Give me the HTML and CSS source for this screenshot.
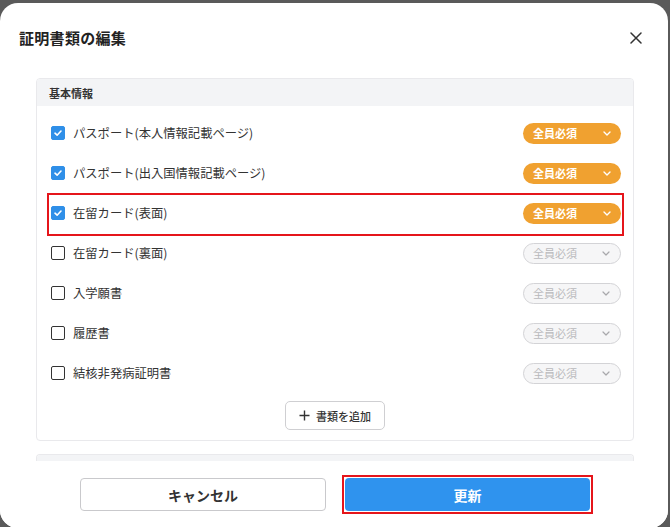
FILE: index.html
```html
<!DOCTYPE html>
<html lang="ja">
<head>
<meta charset="utf-8">
<link rel="stylesheet" href="styles.css">
</head>
<body>
<div class="modal">
  <div class="modal-header">
    <h1 class="title">証明書類の編集</h1>
    <button class="close" aria-label="close">
      <svg width="12" height="12" viewBox="0 0 12 12"><path d="M1 1L11 11M11 1L1 11" stroke="#333" stroke-width="1.5" stroke-linecap="round"/></svg>
    </button>
  </div>
  <div class="modal-body">
    <div class="card">
      <div class="card-header">基本情報</div>
      <ul class="list">
        <li class="row">
          <span class="cb checked"><svg width="10" height="10" viewBox="0 0 10 10"><path d="M2 5.2L4.1 7.2L8 3" fill="none" stroke="#fff" stroke-width="1.6" stroke-linecap="round" stroke-linejoin="round"/></svg></span>
          <span class="label">パスポート(本人情報記載ページ)</span>
          <span class="pill on">全員必須<svg class="chev" width="8" height="5" viewBox="0 0 8 5"><path d="M1 1L4 4L7 1" fill="none" stroke="currentColor" stroke-width="1.4" stroke-linecap="round" stroke-linejoin="round"/></svg></span>
        </li>
        <li class="row">
          <span class="cb checked"><svg width="10" height="10" viewBox="0 0 10 10"><path d="M2 5.2L4.1 7.2L8 3" fill="none" stroke="#fff" stroke-width="1.6" stroke-linecap="round" stroke-linejoin="round"/></svg></span>
          <span class="label">パスポート(出入国情報記載ページ)</span>
          <span class="pill on">全員必須<svg class="chev" width="8" height="5" viewBox="0 0 8 5"><path d="M1 1L4 4L7 1" fill="none" stroke="currentColor" stroke-width="1.4" stroke-linecap="round" stroke-linejoin="round"/></svg></span>
        </li>
        <li class="row highlight">
          <span class="cb checked"><svg width="10" height="10" viewBox="0 0 10 10"><path d="M2 5.2L4.1 7.2L8 3" fill="none" stroke="#fff" stroke-width="1.6" stroke-linecap="round" stroke-linejoin="round"/></svg></span>
          <span class="label">在留カード(表面)</span>
          <span class="pill on">全員必須<svg class="chev" width="8" height="5" viewBox="0 0 8 5"><path d="M1 1L4 4L7 1" fill="none" stroke="currentColor" stroke-width="1.4" stroke-linecap="round" stroke-linejoin="round"/></svg></span>
        </li>
        <li class="row">
          <span class="cb"></span>
          <span class="label">在留カード(裏面)</span>
          <span class="pill off">全員必須<svg class="chev" width="8" height="5" viewBox="0 0 8 5"><path d="M1 1L4 4L7 1" fill="none" stroke="currentColor" stroke-width="1.2" stroke-linecap="round" stroke-linejoin="round"/></svg></span>
        </li>
        <li class="row">
          <span class="cb"></span>
          <span class="label">入学願書</span>
          <span class="pill off">全員必須<svg class="chev" width="8" height="5" viewBox="0 0 8 5"><path d="M1 1L4 4L7 1" fill="none" stroke="currentColor" stroke-width="1.2" stroke-linecap="round" stroke-linejoin="round"/></svg></span>
        </li>
        <li class="row">
          <span class="cb"></span>
          <span class="label">履歴書</span>
          <span class="pill off">全員必須<svg class="chev" width="8" height="5" viewBox="0 0 8 5"><path d="M1 1L4 4L7 1" fill="none" stroke="currentColor" stroke-width="1.2" stroke-linecap="round" stroke-linejoin="round"/></svg></span>
        </li>
        <li class="row">
          <span class="cb"></span>
          <span class="label">結核非発病証明書</span>
          <span class="pill off">全員必須<svg class="chev" width="8" height="5" viewBox="0 0 8 5"><path d="M1 1L4 4L7 1" fill="none" stroke="currentColor" stroke-width="1.2" stroke-linecap="round" stroke-linejoin="round"/></svg></span>
        </li>
      </ul>
      <div class="add-wrap">
        <button class="add"><svg width="11" height="11" viewBox="0 0 11 11"><path d="M5.5 0.5V10.5M0.5 5.5H10.5" stroke="#333" stroke-width="1.4"/></svg>書類を追加</button>
      </div>
    </div>
    <div class="card next">
      <div class="card-header"></div>
    </div>
  </div>
  <div class="modal-footer">
    <button class="btn cancel">キャンセル</button>
    <button class="btn primary">更新</button>
  </div>
</div>
</body>
</html>
```
FILE: styles.css
```css
* { box-sizing: border-box; }
html, body { margin: 0; padding: 0; }
body {
  background: #5a5a5a;
  width: 670px;
  height: 527px;
  overflow: hidden;
  font-family: "Noto Sans CJK JP", "Noto Sans", sans-serif;
  color: #333;
}
.modal {
  margin-top: 3px;
  width: 668px;
  height: 525px;
  background: #fff;
  border-radius: 18px;
  display: flex;
  flex-direction: column;
  overflow: hidden;
}
.modal-header {
  height: 70px;
  flex: none;
  display: flex;
  align-items: center;
  justify-content: space-between;
  padding: 0 26px 0 19px;
}
.title {
  margin: 0;
  font-size: 15px;
  letter-spacing: 0.3px;
  font-weight: 700;
  color: #222;
  line-height: 20px;
}
.close {
  border: 0;
  background: none;
  padding: 0;
  width: 12px;
  height: 12px;
  display: flex;
}
.modal-body {
  flex: none;
  height: 388px;
  overflow: hidden;
  padding: 5px 34px 0 36px;
}
.card {
  border: 1px solid #e9e9ec;
  border-radius: 4px;
  overflow: hidden;
}
.card.next { margin-top: 13px; border-bottom: 0; }
.card-header {
  height: 27px;
  background: #f3f4f6;
  font-size: 11px;
  font-weight: 700;
  color: #333;
  display: flex;
  align-items: center;
  padding-left: 12px;
}
.list {
  list-style: none;
  margin: 0;
  padding: 7px 0 0;
}
.row {
  position: relative;
  height: 40px;
  display: flex;
  align-items: center;
  padding: 0 12px 0 14px;
}
.row.highlight::after {
  content: "";
  position: absolute;
  left: 10px;
  right: 9px;
  top: 0;
  bottom: -3px;
  border: 2px solid #e5151b;
}
.cb {
  width: 14px;
  height: 14px;
  border: 1.6px solid #333;
  border-radius: 2px;
  flex: none;
  display: flex;
  align-items: center;
  justify-content: center;
}
.cb.checked {
  background: #2f8fe8;
  border-color: #2f8fe8;
}
.label {
  margin-left: 8px;
  font-size: 12.3px;
  color: #333;
  flex: 1;
}
.pill {
  width: 98px;
  height: 21px;
  border-radius: 11px;
  display: flex;
  align-items: center;
  justify-content: space-between;
  padding: 0 10px 0 10px;
  font-size: 11px;
  flex: none;
}
.pill.on {
  background: #f0a130;
  color: #fff;
  font-weight: 700;
}
.pill.off {
  background: #f6f6f7;
  border: 1px solid #d3d3d6;
  color: #b9b9bc;
  padding-left: 9px;
}
.pill.off .chev { color: #a8a8ab; }
.add-wrap {
  display: flex;
  justify-content: center;
  padding: 8px 0 10px;
}
.add {
  width: 100px;
  height: 29px;
  border: 1px solid #cfcfd2;
  border-radius: 5px;
  background: #fff;
  display: flex;
  align-items: center;
  justify-content: center;
  gap: 6px;
  font-family: inherit;
  font-size: 11px;
  font-weight: 500;
  color: #333;
  padding: 0;
}
.modal-footer {
  flex: 1;
  display: flex;
  justify-content: center;
  gap: 19px;
  padding-top: 17px;
  padding-left: 2px;
  background: #fff;
}
.btn {
  width: 246px;
  height: 33px;
  border-radius: 4px;
  font-family: inherit;
  font-size: 14px;
  font-weight: 700;
  padding: 0;
}
.cancel {
  background: #fff;
  border: 1px solid #c9c9cc;
  color: #333;
}
.primary {
  position: relative;
  width: 245px;
  background: #2f93ee;
  border: 0;
  color: #fff;
}
.primary::after {
  content: "";
  position: absolute;
  inset: -3px;
  border: 2px solid #e5151b;
}
```
